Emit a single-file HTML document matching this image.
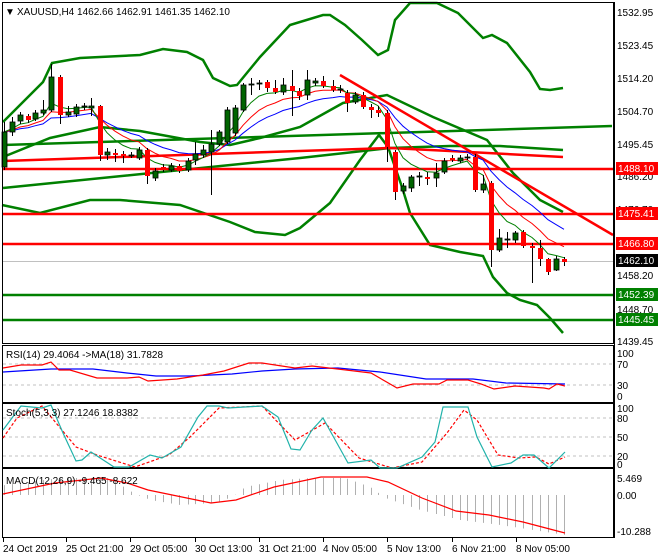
<!DOCTYPE html>
<html><head><meta charset="utf-8"><style>
html,body{margin:0;padding:0;background:#fff;width:660px;height:560px;overflow:hidden}
svg{display:block;font-family:"Liberation Sans",sans-serif;font-size:10px}
</style></head><body>
<svg id="c" width="660" height="560" xmlns="http://www.w3.org/2000/svg">
<rect x="0" y="0" width="660" height="560" fill="#fff"/>
<g id="main"></g>
<g fill="none" stroke="#000" stroke-width="1">
<rect x="2.5" y="2.5" width="611" height="341"/>
<rect x="2.5" y="345.5" width="611" height="57"/>
<rect x="2.5" y="403.5" width="611" height="64"/>
<rect x="2.5" y="468.5" width="611" height="69"/>
</g>
<g fill="#000">
<text x="5" y="15" font-size="10">&#9660;</text>
<text x="17" y="15">XAUUSD,H4  1462.66 1462.91 1461.35 1462.10</text>
<text x="617" y="16">1532.95</text>
<text x="617" y="49">1523.45</text>
<text x="617" y="82">1514.20</text>
<text x="617" y="115">1504.70</text>
<text x="617" y="148">1495.45</text>
<text x="617" y="180">1486.20</text>
<text x="617" y="213">1476.70</text>
<text x="617" y="279">1458.20</text>
<text x="617" y="313">1448.70</text>
<text x="617" y="345">1439.45</text>
</g>
<g>
<rect x="616" y="162" width="42" height="13" fill="#f00"/><text x="618" y="172" fill="#fff">1488.10</text>
<rect x="616" y="207" width="42" height="13" fill="#f00"/><text x="618" y="217" fill="#fff">1475.41</text>
<rect x="616" y="237" width="42" height="13" fill="#f00"/><text x="618" y="247" fill="#fff">1466.80</text>
<rect x="616" y="254" width="42" height="13" fill="#000"/><text x="618" y="264" fill="#fff">1462.10</text>
<rect x="616" y="288" width="42" height="13" fill="#008000"/><text x="618" y="298" fill="#fff">1452.39</text>
<rect x="616" y="313" width="42" height="13" fill="#008000"/><text x="618" y="323" fill="#fff">1445.45</text>
</g>
<g id="ind"></g>
<g fill="#000">
<text x="6" y="358">RSI(14) 29.4064  -&gt;MA(18) 31.7828</text>
<text x="617" y="357">100</text><text x="617" y="368">70</text><text x="617" y="389">30</text><text x="617" y="400">0</text>
<text x="6" y="416">Stoch(5,3,3) 27.1246 18.8382</text>
<text x="617" y="412">100</text><text x="617" y="422">80</text><text x="617" y="441">50</text><text x="617" y="460">20</text><text x="617" y="468">0</text>
<text x="6" y="484">MACD(12,26,9) -9.465 -8.622</text>
<text x="617" y="482">5.469</text><text x="617" y="499">0.00</text><text x="617" y="535">-10.288</text>
<text x="3" y="552">24 Oct 2019</text>
<text x="66" y="552">25 Oct 21:00</text>
<text x="130" y="552">29 Oct 05:00</text>
<text x="195" y="552">30 Oct 13:00</text>
<text x="259" y="552">31 Oct 21:00</text>
<text x="323" y="552">4 Nov 05:00</text>
<text x="387" y="552">5 Nov 13:00</text>
<text x="452" y="552">6 Nov 21:00</text>
<text x="516" y="552">8 Nov 05:00</text>
</g>
</svg>
<script>
var NS="http://www.w3.org/2000/svg";
function el(p,t,a){var e=document.createElementNS(NS,t);for(var k in a)e.setAttribute(k,a[k]);p.appendChild(e);return e;}
function pl(p,pts,col,w,extra){var a={points:pts.map(function(q){return q.join(",")}).join(" "),fill:"none",stroke:col,"stroke-width":w};for(var k in extra)a[k]=extra[k];return el(p,"polyline",a);}
var M=document.getElementById("main"),I=document.getElementById("ind");
el(M,"line",{x1:3,y1:261.5,x2:613,y2:261.5,stroke:"#c0c0c0","stroke-width":1});
var G="#008000",R="#ff0000";
pl(M,[[3,122],[20,105],[43,82],[52,63],[80,58],[140,55],[163,49],[187,52],[203,60],[213,78],[230,86],[237,85],[260,57],[290,25],[323,15],[330,15],[345,25],[362,40],[378,55],[388,50],[395,20],[410,3],[437,3],[458,13],[483,38],[492,35],[507,43],[530,72],[540,89],[550,90],[563,88]],G,2.5);
pl(M,[[3,157],[50,138],[100,127],[140,131],[200,142],[230,145],[260,138],[300,127],[343,103],[387,95],[433,117],[487,140],[513,173],[540,200],[563,212]],G,2.5);
pl(M,[[2,205],[40,213],[90,200],[120,200],[180,205],[230,222],[255,232],[285,235],[300,228],[330,203],[360,160],[379,135],[388,147],[402,187],[410,213],[430,245],[460,252],[483,256],[493,277],[507,293],[520,300],[537,305],[550,318],[563,333]],G,2.5);
pl(M,[[3,145],[612,126]],G,2.5);
pl(M,[[3,188],[300,158],[390,148],[450,146],[500,146],[563,150]],G,2.5);
pl(M,[[3,161],[330,150],[390,148],[450,151],[563,157]],R,2.5);
[169,214,244].forEach(function(y){el(M,"line",{x1:3,y1:y,x2:613,y2:y,stroke:R,"stroke-width":2.5});});
[295,320].forEach(function(y){el(M,"line",{x1:3,y1:y,x2:613,y2:y,stroke:G,"stroke-width":2.5});});
el(M,"line",{x1:340,y1:75,x2:613,y2:235,stroke:R,"stroke-width":2.5});
var D=[[4,167,132,122,170],[12,132,122,117,136],[20,121,115,112,124],[28,116,120,114,123],[35,119,113,110,121],[43,113,110,100,115],[51,110,77,64,112],[60,77,115,75,124],[68,115,112,106,117],[76,114,107,104,117],[84,107,106,103,110],[91,108,106,98,116],[100,106,155,105,161],[107,155,152,148,160],[115,153,155,149,162],[123,154,156,151,163],[131,156,155,152,158],[139,158,150,147,160],[147,150,176,148,184],[155,178,171,168,181],[163,167,170,164,172],[171,170,166,163,172],[179,166,171,164,173],[188,170,161,158,172],[195,160,154,142,165],[203,155,150,145,158],[211,152,144,130,195],[219,144,132,130,146],[227,142,110,107,144],[235,133,108,105,136],[243,110,85,83,112],[251,85,84,78,95],[259,84,83,80,90],[267,82,88,80,92],[275,88,92,80,94],[283,92,85,78,95],[292,86,91,70,116],[299,91,96,88,100],[307,95,80,70,100],[315,83,81,78,86],[323,81,86,76,88],[333,86,90,80,92],[340,90,89,85,93],[347,93,103,90,112],[355,102,95,92,104],[363,95,107,92,109],[371,107,110,104,118],[378,110,113,106,117],[387,113,147,110,162],[395,152,192,150,200],[403,191,186,183,194],[411,188,177,175,192],[419,177,176,172,186],[427,177,179,172,185],[436,178,173,163,187],[444,172,161,158,174],[452,158,160,155,162],[460,161,158,155,163],[467,158,157,154,160],[475,157,190,154,192],[483,190,184,175,193],[491,183,250,181,267],[499,250,238,229,252],[507,240,239,232,248],[515,240,233,231,243],[523,232,246,230,248],[532,246,248,243,283],[540,248,259,240,266],[548,259,272,258,275],[556,270,259,256,271],[564,259,262,257,266]];
function ema(n){var k=2/(n+1),v=D[0][2],o=[];D.forEach(function(d){v=v+k*(d[2]-v);o.push([d[0],v.toFixed(1)]);});return o;}
pl(M,ema(15),"#0000ff",1);pl(M,ema(9),R,1);pl(M,ema(5),G,1);
D.forEach(function(d){var x=d[0],o=d[1],c=d[2],up=c<o;
el(M,"line",{x1:x+.5,y1:d[3],x2:x+.5,y2:d[4],stroke:"#000","stroke-width":1});
var t=Math.min(o,c),h=Math.max(Math.abs(o-c),1);
el(M,"rect",{x:x-2,y:t,width:5,height:h,fill:up?"#006400":"#ff0000",stroke:"#000","stroke-width":up?0.8:0});});
[364,385].forEach(function(y){el(I,"line",{x1:3,y1:y,x2:613,y2:y,stroke:"#c0c0c0","stroke-dasharray":"3,3"});});
pl(I,[[3,372],[51,369],[93,369],[127,373],[156,376],[190,376],[232,374],[262,371],[295,369],[338,368],[380,372],[426,379],[473,379],[506,383],[565,384]],"#0000ff",1.2);
pl(I,[[3,368],[21,365],[42,365],[51,362],[59,370],[70,370],[97,378],[127,378],[139,377],[148,381],[177,379],[203,375],[224,371],[249,363],[262,363],[295,368],[312,366],[346,370],[371,373],[397,388],[413,384],[439,384],[447,380],[468,380],[481,384],[494,389],[515,386],[544,388],[549,389],[557,384],[565,386]],R,1.2);
[418,437,456].forEach(function(y){el(I,"line",{x1:3,y1:y,x2:613,y2:y,stroke:"#c0c0c0","stroke-dasharray":"3,3"});});
pl(I,[[3,438],[17,418],[42,406],[76,447],[97,455],[135,467],[169,455],[190,437],[219,408],[262,406],[295,440],[325,423],[359,458],[392,468],[422,462],[447,433],[464,410],[477,420],[498,455],[519,458],[536,457],[549,464],[565,457]],R,1.2,{"stroke-dasharray":"3,2"});
pl(I,[[3,430],[21,406],[42,408],[51,405],[63,433],[76,461],[82,460],[91,452],[114,467],[129,467],[150,455],[162,458],[181,447],[198,417],[207,406],[219,406],[228,408],[262,406],[278,417],[291,449],[300,450],[312,430],[323,418],[348,463],[371,460],[380,468],[397,468],[422,457],[435,442],[443,407],[468,407],[477,437],[492,467],[511,463],[523,455],[534,455],[549,468],[565,452]],"#20b2aa",1.2);
function hv(x){var p=[[5,10],[60,17],[110,17],[125,7],[135,1],[150,-5],[180,-10],[215,-8],[232,-2],[245,8],[280,15],[310,17],[345,17],[370,8],[385,-3],[420,-15],[460,-25],[500,-30],[565,-40]];for(var i=1;i<p.length;i++){if(x<=p[i][0]){var a=p[i-1],b=p[i];return a[1]+(b[1]-a[1])*(x-a[0])/(b[0]-a[0]);}}return -40;}
D.forEach(function(d){var v=hv(d[0]);el(I,"line",{x1:d[0]+.5,y1:495,x2:d[0]+.5,y2:495-v,stroke:"#b0b0b0","stroke-width":1});});
pl(I,[[3,494],[55,483],[101,478],[127,483],[148,490],[211,503],[236,500],[274,487],[321,477],[367,477],[388,482],[422,498],[456,511],[489,515],[523,522],[565,533]],R,1.2);
[3,66,130,195,259,323,387,452,516].forEach(function(x){el(I,"line",{x1:x+.5,y1:538,x2:x+.5,y2:542,stroke:"#000"});});
el(I,"line",{x1:614.5,y1:2,x2:614.5,y2:538,stroke:"#000"});
</script>
</body></html>
